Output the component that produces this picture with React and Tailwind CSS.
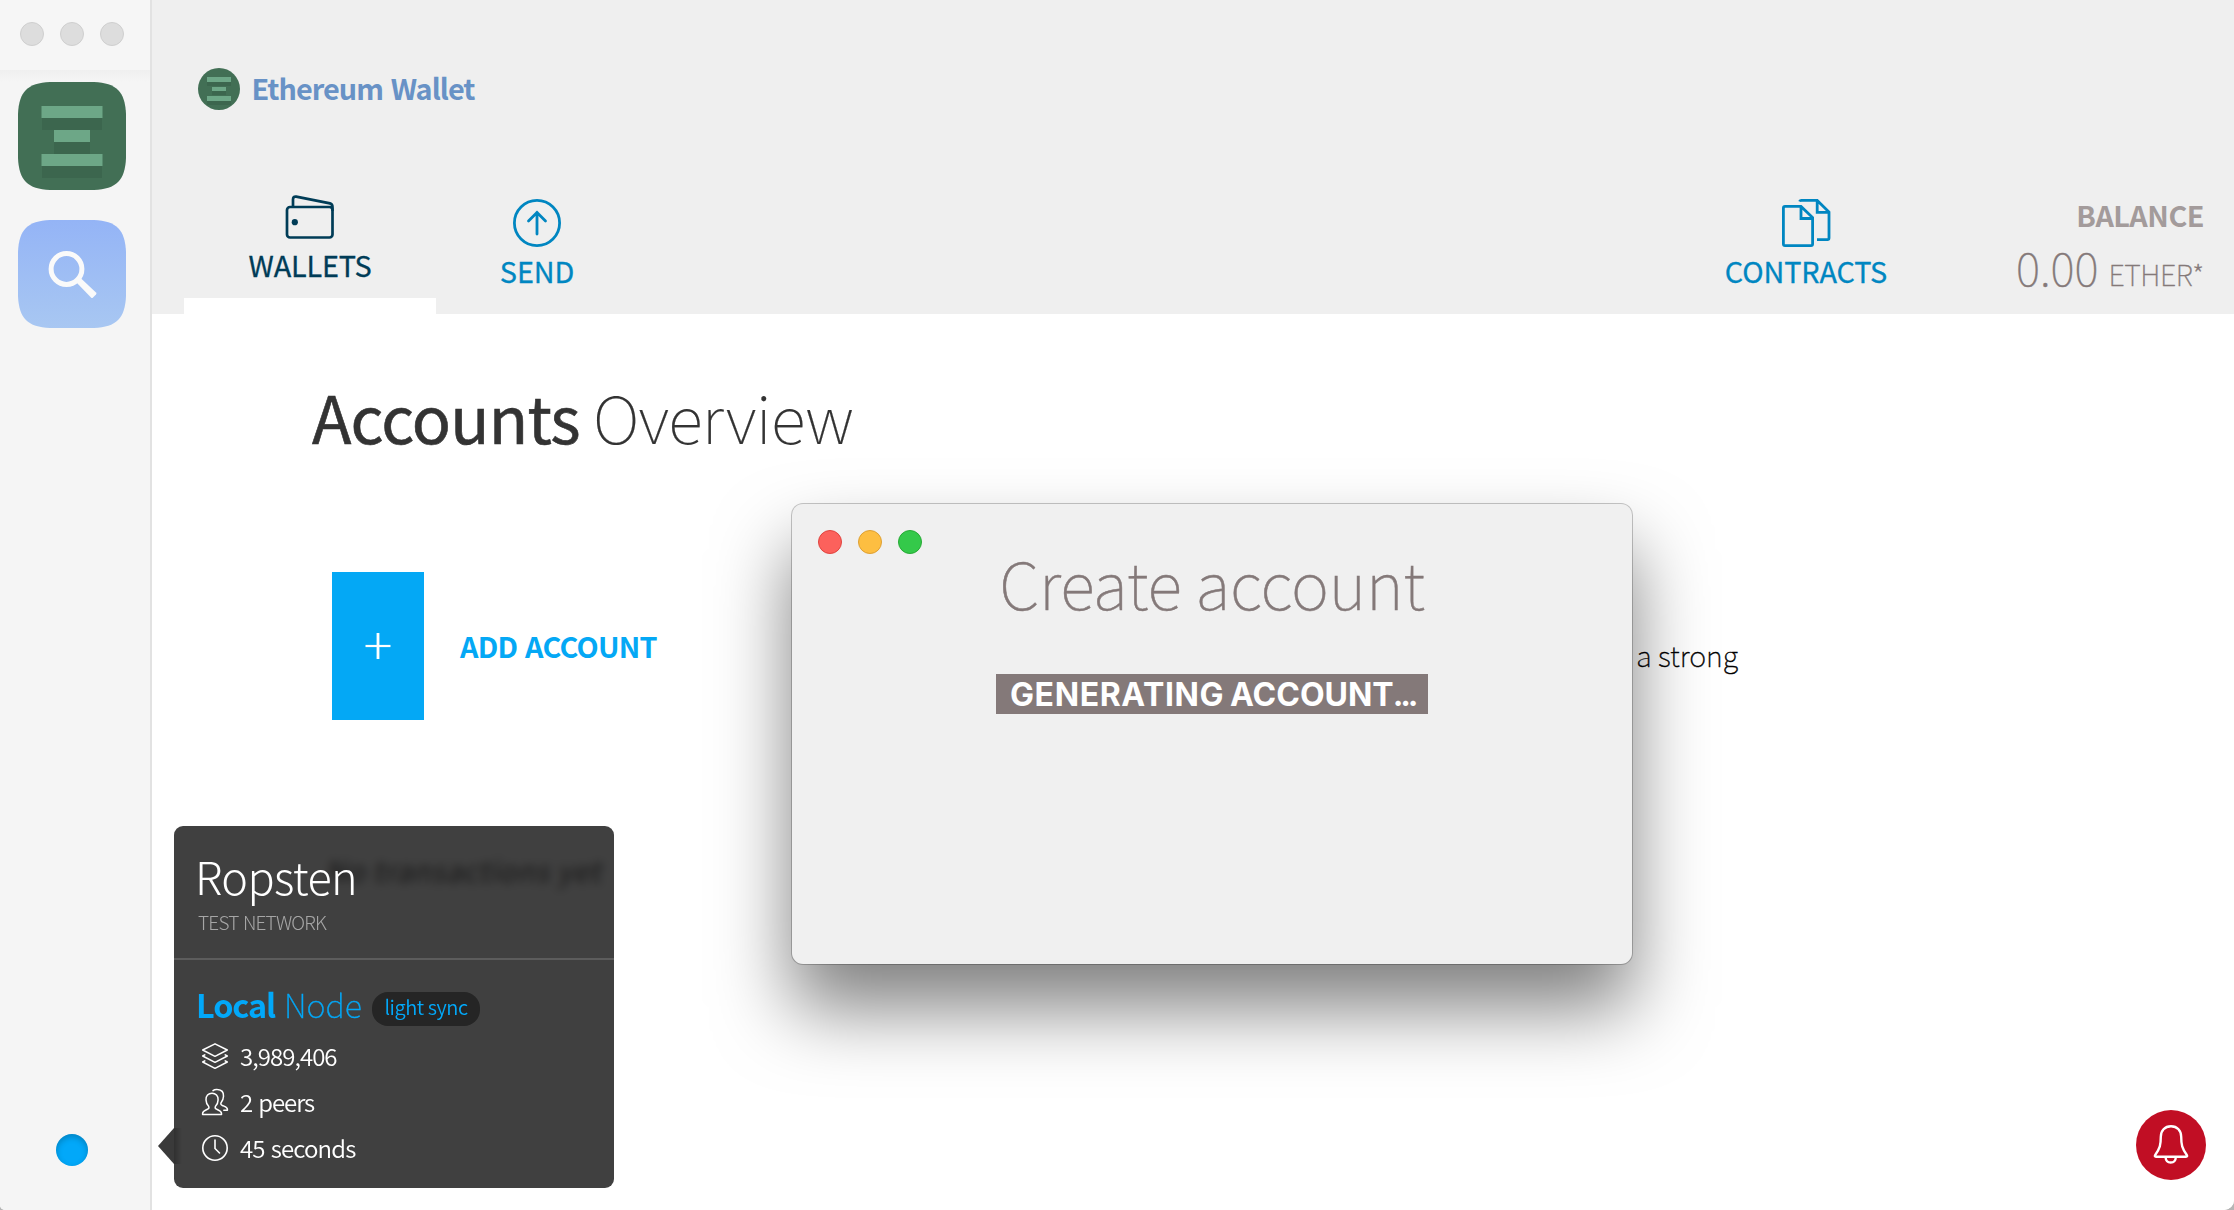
import React from 'react';

const AppIcon = () => (
  <svg viewBox="0 0 108 108" className="block size-[108px]">
    <path d="M32 0H76C98.500 1 107 9.500 108 32V76C107 98.500 98.500 107 76 108H32C9.500 107 1 98.500 0 76V32C1 9.500 9.500 1 32 0Z" fill="#426f55" />
    <g fill="#3c664e">
      <path d="M24 36h60v12H24zM36 60h36v12H36zM24 84h60v12H24z" />
    </g>
    <g fill="#6da787">
      <path d="M23.500 24h61v12h-61zM36 48h36v12H36zM23.500 72h61v12h-61z" />
    </g>
  </svg>
);

const BrowseIcon = () => (
  <svg viewBox="0 0 108 108" className="block size-[108px]">
    <defs>
      <linearGradient id="sky" x1="0" y1="0" x2="0" y2="1">
        <stop offset="0" stopColor="#94b4f6" />
        <stop offset="1" stopColor="#a8c7f2" />
      </linearGradient>
    </defs>
    <path d="M32 0H76C98.500 1 107 9.500 108 32V76C107 98.500 98.500 107 76 108H32C9.500 107 1 98.500 0 76V32C1 9.500 9.500 1 32 0Z" fill="url(#sky)" />
    <circle cx="48.500" cy="49" r="15.400" fill="none" stroke="#fafafa" strokeWidth="5" />
    <path d="M58.500 59 61.500 57 78 72.500q1 1 0 2L75 77.500q-1 1-2 0L58 62Z" fill="#fafafa" />
  </svg>
);

const BrandIcon = () => (
  <svg viewBox="0 0 42 42" className="block size-[42px]">
    <circle cx="21" cy="21" r="21" fill="#426f55" />
    <path d="M9 14h24v4H9zM14 23h14v4H14zM9 33h24v4H9z" fill="#3c664e" />
    <path d="M9 9h24v5H9zM14 19h14v4H14zM9 28h24v5H9z" fill="#6da787" />
  </svg>
);

const WalletIcon = () => (
  <svg viewBox="0 0 52 48" className="block h-[48px] w-[52px]" fill="none" stroke="#003c57" strokeWidth="2.700">
    <rect x="3" y="14" width="45.500" height="30.500" rx="3" />
    <path d="M9 14V6.500q0-3.300 3.200-2.900l33.800 6.800q2.500.8 2.500 3.600v4" />
    <circle cx="10.800" cy="29.200" r="3.100" fill="#003c57" stroke="none" />
  </svg>
);

const SendIcon = () => (
  <svg viewBox="0 0 48 48" className="block size-[48px]" fill="none" stroke="#0086c1" strokeWidth="2.800">
    <circle cx="24" cy="24" r="22.600" />
    <path d="M24 35V13.500M15.500 22 24 13.500l8.500 8.500" strokeLinecap="round" />
  </svg>
);

const ContractsIcon = () => (
  <svg viewBox="0 0 50 48" className="block h-[48px] w-[50px]" fill="none" stroke="#0086c1" strokeWidth="2.800">
    <path d="M20 7.400H4q-1.600 0-1.600 1.600V45q0 1.600 1.600 1.600H30q1.600 0 1.600-1.600V18.500ZM20 7.400V19.500h11.600" />
    <path d="M18.500 2.500q.5-1.100 2-1.100H36.200L48 13v26q0 1.600-1.600 1.600H36M36.200 1.400V13.400H48" />
  </svg>
);

const LayersIcon = () => (
  <svg viewBox="0 0 28 28" className="block size-[28px]" fill="none" stroke="#fff" strokeWidth="1.500" strokeLinejoin="round" strokeLinecap="round">
    <path d="M14 1.800 26.300 8 14 14.300 1.700 8Z" />
    <path d="M3.800 12.800 1.700 14 14 20.300 26.300 14l-2.100-1.200" />
    <path d="M3.800 18.800 1.700 20 14 26.300 26.300 20l-2.100-1.200" />
  </svg>
);

const PeersIcon = () => (
  <svg viewBox="0 0 28 28" className="block size-[28px]" fill="none" stroke="#fff" strokeWidth="1.500" strokeLinecap="round" strokeLinejoin="round">
    <path d="M11 5.300c-3.700 0-6.200 2.600-6 6.600.1 2.600.7 4.500 2.600 6.400.8 1.500.2 2.300-1 2.900-2.300 1.300-5 1.700-5 4.300v.9H20.500v-.9c0-2.600-2.700-3-5-4.300-1.200-.6-1.800-1.400-1-2.900 1.900-1.900 2.500-3.800 2.600-6.400.2-4-2.400-6.600-6.100-6.600Z" />
    <path d="M12 2.600c1.500-1.100 3.100-1.200 4.500-1 4 .3 6.200 3 6 6.600-.1 2.300-.7 4.300-2.300 6.200-.8 1.500-.3 2.300.9 2.900 2.500 1.300 5.300 1.700 5.300 4v.9h-3.600" />
  </svg>
);

const ClockIcon = () => (
  <svg viewBox="0 0 28 28" className="block size-[28px]" fill="none" stroke="#fff" strokeWidth="1.600" strokeLinecap="round">
    <circle cx="14" cy="14" r="12.200" />
    <path d="M14 6v8.500l4.500 4.500" />
  </svg>
);

const BellIcon = () => (
  <svg viewBox="0 0 36 42" className="block h-[42px] w-[36px]" fill="none" stroke="#fff" strokeWidth="2.400" strokeLinejoin="round">
    <path d="M18 2.300c-6.300 0-10.200 4.500-10.200 10.500 0 8-.8 11.500-5.600 18.200q-1 1.700.8 1.700H33q1.800 0 .8-1.700C29 24.300 28.200 20.800 28.200 12.800 28.200 6.800 24.300 2.300 18 2.300Z" />
    <path d="M12.600 33.500c.2 3.200 2.400 5 5.100 5s4.900-1.800 5.100-5" />
  </svg>
);

const stats = [
  { icon: <LayersIcon />, label: '3,989,406', tracking: 'tracking-[-0.95px]' },
  { icon: <PeersIcon />, label: '2 peers', tracking: 'tracking-[-1.1px] [word-spacing:2px]' },
  { icon: <ClockIcon />, label: '45 seconds', tracking: 'tracking-[-0.85px] [word-spacing:1.5px]' },
];

function Sidebar() {
  return (
    <aside className="flex w-[152px] shrink-0 flex-col border-r-2 border-[#e2e2e2] bg-[#f5f5f5]">
      <div className="flex h-[70px] gap-4 bg-[#f6f6f6] pt-[22px] pl-5">
        <span className="size-6 rounded-full border border-[#cfcfcf] bg-[#dddddd]" />
        <span className="size-6 rounded-full border border-[#cfcfcf] bg-[#dddddd]" />
        <span className="size-6 rounded-full border border-[#cfcfcf] bg-[#dddddd]" />
      </div>
      <div className="h-3 bg-linear-to-b from-[#efefef] to-[#f5f5f5]" />
      <div className="flex flex-col gap-[30px] pl-[18px]">
        <AppIcon />
        <BrowseIcon />
      </div>
      <span className="mt-auto mb-[44px] ml-[56px] size-8 rounded-full bg-[#02a8f9] shadow-[inset_0_3px_6px_rgba(0,0,0,0.22)]" />
    </aside>
  );
}

function Header() {
  return (
    <header className="flex h-[314px] shrink-0 flex-col bg-[#efefef] pt-[68px]">
      <div className="flex h-[42px] pl-[46px]">
        <BrandIcon />
        <span className="ml-[11.5px] text-[28.8px] leading-[39px] font-bold tracking-[-0.95px] [word-spacing:2px] text-[#6892c6]">Ethereum Wallet</span>
      </div>
      <nav className="flex h-[204px] text-[28.8px] leading-[40px]">
        <div className="ml-8 flex w-[252px] flex-col items-center pt-[83px] text-[#003c57]">
          <WalletIcon />
          <span className="mt-1 tracking-[-0.2px] [-webkit-text-stroke:0.3px]">WALLETS</span>
          <span className="mt-auto h-4 w-full bg-white" />
        </div>
        <div className="flex w-[202px] flex-col items-center pt-[89px] text-[#0086c1]">
          <SendIcon />
          <span className="mt-1 tracking-[-0.1px] [-webkit-text-stroke:0.3px]">SEND</span>
        </div>
        <div className="ml-auto flex w-[202px] flex-col items-center pt-[89px] text-[#0086c1]">
          <ContractsIcon />
          <span className="mt-1 tracking-[-0.1px] [-webkit-text-stroke:0.3px]">CONTRACTS</span>
        </div>
        <div className="flex w-[327px] flex-col items-end pt-[85px] pr-[30px] text-[#847979]">
          <span className="font-bold tracking-[-0.5px] text-[#a39b9b]">BALANCE</span>
          <div className="mt-[3px] flex items-baseline">
            <span className="text-[46px] leading-[56px] font-thin [-webkit-text-stroke:0.4px]">0.00</span>
            <span className="ml-[10px] font-thin tracking-[-0.4px] [-webkit-text-stroke:0.4px]">ETHER*</span>
          </div>
        </div>
      </nav>
    </header>
  );
}

function Accounts() {
  return (
    <main className="flex flex-1 flex-col bg-white">
      <h1 className="mt-[66px] ml-[160px] flex text-[64.8px] leading-[72px] text-[#333]">
        <strong className="w-[281px] font-normal tracking-[-0.85px] [-webkit-text-stroke:0.6px]">Accounts</strong>
        <span className="font-thin tracking-[-0.58px] [-webkit-text-stroke:0.2px]">Overview</span>
      </h1>
      <section className="mt-[120px] flex h-[148px] items-center pr-[496px] pl-[180px]">
        <div className="flex h-full w-[92px] items-center justify-center bg-[#04a8f5]">
          <svg viewBox="0 0 26 26" className="block size-[26px]" stroke="#fff">
            <path d="M13 0v26" strokeWidth="2.800" />
            <path d="M.5 13h25" strokeWidth="2.200" />
          </svg>
        </div>
        <span className="ml-[36px] text-[28.8px] leading-[40px] font-bold tracking-[-0.75px] [word-spacing:2px] text-[#04a8f5]">ADD ACCOUNT</span>
        <p className="mt-[63px] ml-auto self-start text-[28.8px] leading-[40px] font-thin text-black [-webkit-text-stroke:0.4px]">a strong</p>
      </section>
      <p className="mt-[130px] ml-[176px] -skew-x-12 self-start text-[28.8px] leading-[40px] tracking-[0.9px] text-black/70">No transactions yet</p>
    </main>
  );
}

function NodePopup() {
  return (
    <div className="absolute top-[826px] left-[174px] h-[362px] w-[440px] text-white">
      <span className="absolute top-[302px] left-[-16px] h-9 w-4 bg-[#3a3a3a] [clip-path:polygon(100%_0,0_50%,100%_100%)]" />
      <div className="flex h-full flex-col rounded-[9px] bg-black/75 backdrop-blur-[5px]">
        <div className="flex h-[134px] flex-col border-b-2 border-[#5c5c5c] pt-5">
          <span className="ml-[21px] text-[45px] leading-[60px] font-light tracking-[-0.6px]">Ropsten</span>
          <span className="mt-[2px] ml-6 text-[19px] leading-[28px] font-light tracking-[-0.8px] [word-spacing:1px] text-[#a6a6a6]">TEST NETWORK</span>
        </div>
        <div className="mt-[22px] flex h-[44px] pl-[22px] text-[32.4px] leading-[44px] text-[#02a8f9]">
          <strong className="font-bold tracking-[-1.1px]">Local</strong>
          <span className="w-[97px] pl-[9px] font-thin [-webkit-text-stroke:0.4px]">Node</span>
          <span className="mt-[10px] flex h-[34px] w-[108px] justify-center rounded-[16px] bg-[#252525] text-[20px] leading-[30px] font-[350] tracking-[-0.45px]">light sync</span>
        </div>
        <ul className="mt-[7px] pl-[27px]">
          {stats.map((s) => (
            <li key={s.label} className="flex h-[46px] items-center text-[24px] leading-[46px] font-[350]">
              {s.icon}
              <span className={`ml-[11px] ${s.tracking}`}>{s.label}</span>
            </li>
          ))}
        </ul>
      </div>
      <span className="absolute top-[302px] left-0 h-9 w-2 bg-linear-to-r from-black/25 to-transparent" />
    </div>
  );
}

function CreateAccountWindow() {
  return (
    <div className="absolute top-[504px] left-[792px] flex h-[460px] w-[840px] flex-col items-center rounded-[11px] bg-[#f0f0f0] pt-[26px] shadow-[0_0_0_1px_rgba(0,0,0,0.22),0_44px_76px_rgba(0,0,0,0.5)]">
      <div className="flex gap-4 self-start pl-[26px]">
        <span className="size-6 rounded-full border border-[#e0443f] bg-[#fc615c]" />
        <span className="size-6 rounded-full border border-[#dea033] bg-[#fdbe41]" />
        <span className="size-6 rounded-full border border-[#27aa35] bg-[#34c94a]" />
      </div>
      <h2 className="-mt-2 text-[64.8px] leading-[72px] font-thin tracking-[-0.2px] text-[#847979] [-webkit-text-stroke:0.5px]">Create account</h2>
      <div className="mt-[56px] flex h-[40px] w-[432px] bg-[#847979] pl-[14px] font-['Inter'] text-[32px] leading-[41px] font-bold whitespace-nowrap text-white">
        <span className="w-[220px] tracking-[0.6px]">GENERATING</span>
        <span className="tracking-[0px]">ACCOUNT</span>
        <span className="-ml-px tracking-[-3.2px]">...</span>
      </div>
    </div>
  );
}

export default function App() {
  return (
    <div className="bg-[#b5b5b5]">
      <div className="relative flex h-[1210px] w-[2234px] overflow-hidden rounded-br-[10px] rounded-bl-[5px] bg-white font-['Noto_Sans_CJK_SC',sans-serif]">
        <Sidebar />
        <div className="flex flex-1 flex-col">
          <Header />
          <Accounts />
        </div>
        <CreateAccountWindow />
        <NodePopup />
        <button className="absolute top-[1110px] left-[2136px] flex size-[70px] items-center justify-center rounded-full bg-[#c10e24]">
          <BellIcon />
        </button>
      </div>
    </div>
  );
}
